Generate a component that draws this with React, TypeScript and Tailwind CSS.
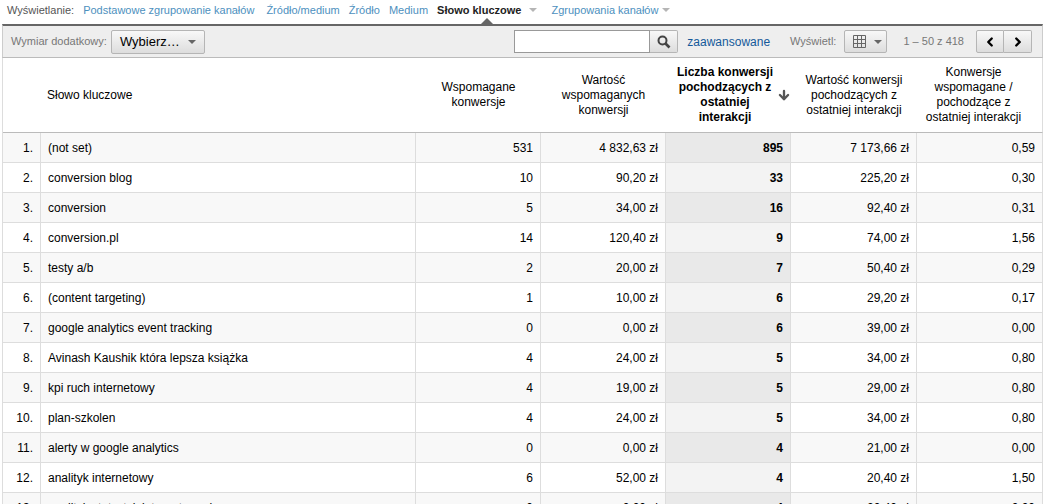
import { ArrowDown, ChevronLeft, ChevronRight } from "lucide-react"

const rows = [
  ["(not set)", "531", "4 832,63 zł", "895", "7 173,66 zł", "0,59"],
  ["conversion blog", "10", "90,20 zł", "33", "225,20 zł", "0,30"],
  ["conversion", "5", "34,00 zł", "16", "92,40 zł", "0,31"],
  ["conversion.pl", "14", "120,40 zł", "9", "74,00 zł", "1,56"],
  ["testy a/b", "2", "20,00 zł", "7", "50,40 zł", "0,29"],
  ["(content targeting)", "1", "10,00 zł", "6", "29,20 zł", "0,17"],
  ["google analytics event tracking", "0", "0,00 zł", "6", "39,00 zł", "0,00"],
  ["Avinash Kaushik która lepsza książka", "4", "24,00 zł", "5", "34,00 zł", "0,80"],
  ["kpi ruch internetowy", "4", "19,00 zł", "5", "29,00 zł", "0,80"],
  ["plan-szkolen", "4", "24,00 zł", "5", "34,00 zł", "0,80"],
  ["alerty w google analytics", "0", "0,00 zł", "4", "21,00 zł", "0,00"],
  ["analityk internetowy", "6", "52,00 zł", "4", "20,40 zł", "1,50"],
  ["analityk statystyk internetowych", "0", "0,00 zł", "4", "20,40 zł", "0,00"],
]

const buttonStyle = "flex items-center border border-[#b5b5b5] bg-linear-to-b from-[#f8f8f8] to-[#dddddd]"

function Caret({ className }: { className: string }) {
  return (
    <svg width="8" height="4" viewBox="0 0 8 4" className={className} aria-hidden="true">
      <path d="M0 0h8L4 4z" fill="currentColor" />
    </svg>
  )
}

function GridIcon() {
  return (
    <svg width="13" height="13" viewBox="0 0 13 13" fill="none" stroke="#666" aria-hidden="true">
      <path d="M.5 .5h12v12H.5zM4.5 0v13M8.5 0v13M0 4.5h13M0 8.5h13" />
    </svg>
  )
}

function SearchIcon() {
  return (
    <svg width="14" height="14" viewBox="0 0 14 14" fill="none" stroke="#444" aria-hidden="true">
      <circle cx="5.5" cy="5.5" r="4" strokeWidth="2" />
      <path d="M8.5 8.5l4 4" strokeWidth="2.6" />
    </svg>
  )
}

function DimensionNav() {
  return (
    <nav className="flex h-6 items-center pb-1 pl-[7px] text-[11px] text-[#4d90be]">
      <span className="mr-[9px] text-[#555]">Wyświetlanie:</span>
      <a href="#" className="mr-3">Podstawowe zgrupowanie kanałów</a>
      <a href="#" className="mr-[9px]">Źródło/medium</a>
      <a href="#" className="mr-[9px]">Źródło</a>
      <a href="#" className="mr-[9px]">Medium</a>
      <a href="#" className="relative mr-[14px] flex items-center gap-2 font-bold text-[#222]">
        Słowo kluczowe
        <Caret className="text-[#b5b5b5]" />
        <svg width="12" height="6" viewBox="0 0 12 6" className="absolute top-4 left-11" aria-hidden="true">
          <path d="M6 0l6 6H0z" fill="#666" />
        </svg>
      </a>
      <a href="#" className="flex items-center gap-1">
        Zgrupowania kanałów
        <Caret className="text-[#b5b5b5]" />
      </a>
    </nav>
  )
}

function Toolbar() {
  return (
    <div className="flex h-[34px] items-center border-x border-t-2 border-b border-x-[#ccc] border-t-[#666] border-b-[#bbb] bg-[#eee] pr-[10px] pl-2 text-[11px] text-[#777]">
      <span className="mr-1">Wymiar dodatkowy:</span>
      <button className={`${buttonStyle} h-6 gap-2 rounded-xs px-2 text-[13px] text-black`}>
        Wybierz…
        <Caret className="text-[#666]" />
      </button>
      <div className="ml-auto flex items-center">
        <input aria-label="Szukaj" type="text" className="h-[23px] w-[136px] border border-[#999] bg-white px-1 text-xs text-black outline-none" />
        <button aria-label="Szukaj" className={`${buttonStyle} h-[23px] w-7 justify-center rounded-r-xs border-l-0`}>
          <SearchIcon />
        </button>
        <a href="#" className="ml-[9px] text-xs text-[#15599a]">zaawansowane</a>
        <span className="mr-2 ml-5">Wyświetl:</span>
        <button aria-label="Widok tabeli" className={`${buttonStyle} h-[23px] gap-2 rounded-xs pr-1 pl-2`}>
          <GridIcon />
          <Caret className="text-[#666]" />
        </button>
        <span className="mr-3 ml-4">1 – 50 z 418</span>
        <button aria-label="Poprzednia strona" className={`${buttonStyle} h-[23px] w-7 justify-center rounded-l-xs text-black`}>
          <ChevronLeft size={14} strokeWidth={4} />
        </button>
        <button aria-label="Następna strona" className={`${buttonStyle} h-[23px] w-7 justify-center rounded-r-xs border-l-0 text-black`}>
          <ChevronRight size={14} strokeWidth={4} />
        </button>
      </div>
    </div>
  )
}

function KeywordTable() {
  return (
    <table className="w-full table-fixed border-separate border-spacing-0 border-l border-[#ddd] text-xs leading-[15px]">
      <colgroup>
        <col className="w-[38px]" />
        <col />
        <col className="w-[125px]" />
        <col className="w-[125px]" />
        <col className="w-[125px]" />
        <col className="w-[126px]" />
        <col className="w-[126px]" />
      </colgroup>
      <thead>
        <tr className="h-[75px] *:border-b *:border-b-[#bbb] *:font-normal">
          <th colSpan={2} className="pl-11 text-left">Słowo kluczowe</th>
          <th>Wspomagane<br />konwersje</th>
          <th>Wartość<br />wspomaganych<br />konwersji</th>
          <th aria-sort="descending">
            <div className="flex items-center justify-end gap-1 font-bold">
              <span>Liczba konwersji<br />pochodzących z<br />ostatniej<br />interakcji</span>
              <ArrowDown size={14} strokeWidth={4} className="text-[#555]" />
            </div>
          </th>
          <th>Wartość konwersji<br />pochodzących z<br />ostatniej interakcji</th>
          <th className="border-r border-r-[#ddd] pr-3">Konwersje<br />wspomagane /<br />pochodzące z<br />ostatniej interakcji</th>
        </tr>
      </thead>
      <tbody>
        {rows.map(([keyword, ...values], i) => (
          <tr key={keyword} className="h-[30px] odd:bg-[#f8f8f8] *:border-r *:border-b *:border-[#ddd] *:px-[7px] *:pt-[2px] odd:[&>td:nth-child(5)]:bg-[#e9e9e9] even:[&>td:nth-child(5)]:bg-[#f3f3f3] [&>td:nth-child(5)]:font-bold">
            <td className="text-right">{i + 1}.</td>
            <td>{keyword}</td>
            {values.map((value, j) => (
              <td key={j} className="text-right">{value}</td>
            ))}
          </tr>
        ))}
      </tbody>
    </table>
  )
}

export default function App() {
  return (
    <div className="h-screen overflow-hidden bg-white font-['Liberation_Sans',Arial,sans-serif] text-black">
      <DimensionNav />
      <main className="mr-[3px] ml-[2px]">
        <Toolbar />
        <KeywordTable />
      </main>
    </div>
  )
}
